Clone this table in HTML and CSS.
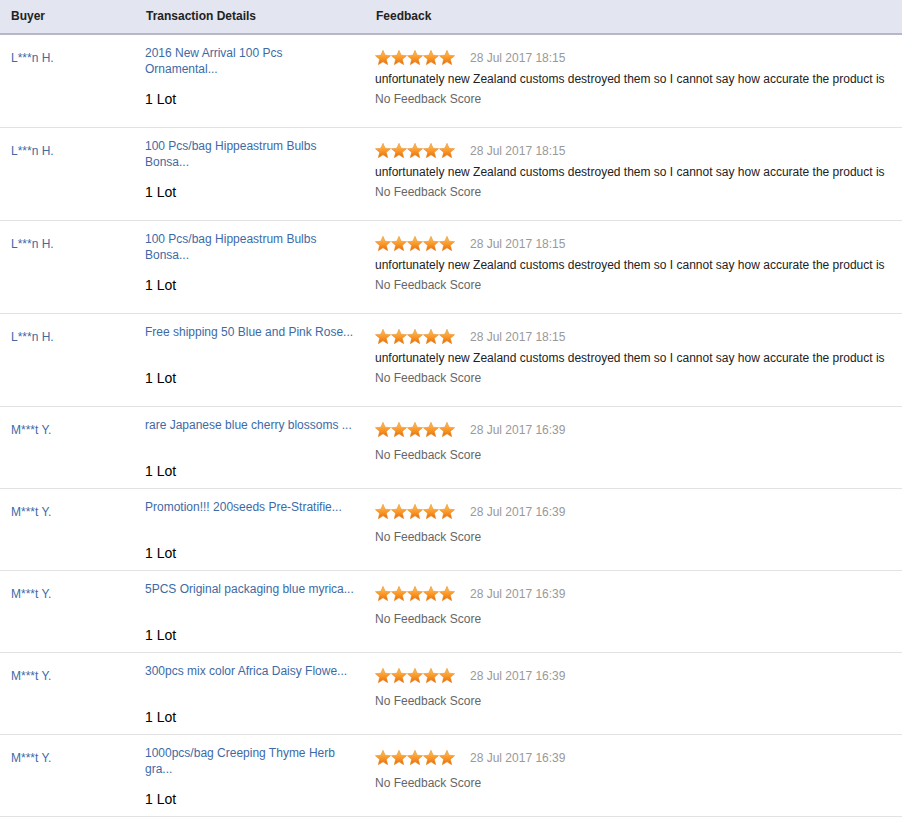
FILE: index.html
```html
<html>
<head>
<meta charset="utf-8">
<link rel="stylesheet" href="styles.css">
</head>
<body>
<svg class="defs" width="0" height="0">
  <defs>
    <linearGradient id="stargrad" x1="0" y1="0" x2="0" y2="1">
      <stop offset="0" stop-color="#ffc45a"/>
      <stop offset="0.5" stop-color="#fb9a2a"/>
      <stop offset="1" stop-color="#e86a0a"/>
    </linearGradient>
    <symbol id="star" viewBox="0 0 16 15">
      <path d="M8 0.3 L10.1 5.2 L15.6 5.7 L11.4 9.3 L12.7 14.7 L8 11.8 L3.3 14.7 L4.6 9.3 L0.4 5.7 L5.9 5.2 Z" fill="url(#stargrad)" stroke="#e08420" stroke-width="0.5"/>
    </symbol>
  </defs>
</svg>

<div class="fbtable">
  <div class="fbrow fbhead">
    <div class="c-buyer">Buyer</div>
    <div class="c-trans">Transaction Details</div>
    <div class="c-fb">Feedback</div>
  </div>

  <div class="fbrow">
    <div class="c-buyer"><a href="#">L***n H.</a></div>
    <div class="c-trans"><a class="ptitle" href="#">2016 New Arrival 100 Pcs Ornamental...</a><p class="qty">1 Lot</p></div>
    <div class="c-fb has-comment">
      <div class="starline"><svg class="stars" viewBox="0 0 80 15"><use href="#star" x="0" width="16" height="15"/><use href="#star" x="16" width="16" height="15"/><use href="#star" x="32" width="16" height="15"/><use href="#star" x="48" width="16" height="15"/><use href="#star" x="64" width="16" height="15"/></svg><span class="date">28 Jul 2017 18:15</span></div>
      <p class="comment">unfortunately new Zealand customs destroyed them so I cannot say how accurate the product is</p>
      <p class="score">No Feedback Score</p>
    </div>
  </div>

  <div class="fbrow">
    <div class="c-buyer"><a href="#">L***n H.</a></div>
    <div class="c-trans"><a class="ptitle" href="#">100 Pcs/bag Hippeastrum Bulbs Bonsa...</a><p class="qty">1 Lot</p></div>
    <div class="c-fb has-comment">
      <div class="starline"><svg class="stars" viewBox="0 0 80 15"><use href="#star" x="0" width="16" height="15"/><use href="#star" x="16" width="16" height="15"/><use href="#star" x="32" width="16" height="15"/><use href="#star" x="48" width="16" height="15"/><use href="#star" x="64" width="16" height="15"/></svg><span class="date">28 Jul 2017 18:15</span></div>
      <p class="comment">unfortunately new Zealand customs destroyed them so I cannot say how accurate the product is</p>
      <p class="score">No Feedback Score</p>
    </div>
  </div>

  <div class="fbrow">
    <div class="c-buyer"><a href="#">L***n H.</a></div>
    <div class="c-trans"><a class="ptitle" href="#">100 Pcs/bag Hippeastrum Bulbs Bonsa...</a><p class="qty">1 Lot</p></div>
    <div class="c-fb has-comment">
      <div class="starline"><svg class="stars" viewBox="0 0 80 15"><use href="#star" x="0" width="16" height="15"/><use href="#star" x="16" width="16" height="15"/><use href="#star" x="32" width="16" height="15"/><use href="#star" x="48" width="16" height="15"/><use href="#star" x="64" width="16" height="15"/></svg><span class="date">28 Jul 2017 18:15</span></div>
      <p class="comment">unfortunately new Zealand customs destroyed them so I cannot say how accurate the product is</p>
      <p class="score">No Feedback Score</p>
    </div>
  </div>

  <div class="fbrow">
    <div class="c-buyer"><a href="#">L***n H.</a></div>
    <div class="c-trans"><a class="ptitle" href="#">Free shipping 50 Blue and Pink Rose...</a><p class="qty">1 Lot</p></div>
    <div class="c-fb has-comment">
      <div class="starline"><svg class="stars" viewBox="0 0 80 15"><use href="#star" x="0" width="16" height="15"/><use href="#star" x="16" width="16" height="15"/><use href="#star" x="32" width="16" height="15"/><use href="#star" x="48" width="16" height="15"/><use href="#star" x="64" width="16" height="15"/></svg><span class="date">28 Jul 2017 18:15</span></div>
      <p class="comment">unfortunately new Zealand customs destroyed them so I cannot say how accurate the product is</p>
      <p class="score">No Feedback Score</p>
    </div>
  </div>

  <div class="fbrow">
    <div class="c-buyer"><a href="#">M***t Y.</a></div>
    <div class="c-trans"><a class="ptitle" href="#">rare Japanese blue cherry blossoms ...</a><p class="qty">1 Lot</p></div>
    <div class="c-fb">
      <div class="starline"><svg class="stars" viewBox="0 0 80 15"><use href="#star" x="0" width="16" height="15"/><use href="#star" x="16" width="16" height="15"/><use href="#star" x="32" width="16" height="15"/><use href="#star" x="48" width="16" height="15"/><use href="#star" x="64" width="16" height="15"/></svg><span class="date">28 Jul 2017 16:39</span></div>
      <p class="score">No Feedback Score</p>
    </div>
  </div>

  <div class="fbrow">
    <div class="c-buyer"><a href="#">M***t Y.</a></div>
    <div class="c-trans"><a class="ptitle" href="#">Promotion!!! 200seeds Pre-Stratifie...</a><p class="qty">1 Lot</p></div>
    <div class="c-fb">
      <div class="starline"><svg class="stars" viewBox="0 0 80 15"><use href="#star" x="0" width="16" height="15"/><use href="#star" x="16" width="16" height="15"/><use href="#star" x="32" width="16" height="15"/><use href="#star" x="48" width="16" height="15"/><use href="#star" x="64" width="16" height="15"/></svg><span class="date">28 Jul 2017 16:39</span></div>
      <p class="score">No Feedback Score</p>
    </div>
  </div>

  <div class="fbrow">
    <div class="c-buyer"><a href="#">M***t Y.</a></div>
    <div class="c-trans"><a class="ptitle" href="#">5PCS Original packaging blue myrica...</a><p class="qty">1 Lot</p></div>
    <div class="c-fb">
      <div class="starline"><svg class="stars" viewBox="0 0 80 15"><use href="#star" x="0" width="16" height="15"/><use href="#star" x="16" width="16" height="15"/><use href="#star" x="32" width="16" height="15"/><use href="#star" x="48" width="16" height="15"/><use href="#star" x="64" width="16" height="15"/></svg><span class="date">28 Jul 2017 16:39</span></div>
      <p class="score">No Feedback Score</p>
    </div>
  </div>

  <div class="fbrow">
    <div class="c-buyer"><a href="#">M***t Y.</a></div>
    <div class="c-trans"><a class="ptitle" href="#">300pcs mix color Africa Daisy Flowe...</a><p class="qty">1 Lot</p></div>
    <div class="c-fb">
      <div class="starline"><svg class="stars" viewBox="0 0 80 15"><use href="#star" x="0" width="16" height="15"/><use href="#star" x="16" width="16" height="15"/><use href="#star" x="32" width="16" height="15"/><use href="#star" x="48" width="16" height="15"/><use href="#star" x="64" width="16" height="15"/></svg><span class="date">28 Jul 2017 16:39</span></div>
      <p class="score">No Feedback Score</p>
    </div>
  </div>

  <div class="fbrow">
    <div class="c-buyer"><a href="#">M***t Y.</a></div>
    <div class="c-trans"><a class="ptitle" href="#">1000pcs/bag Creeping Thyme Herb gra...</a><p class="qty">1 Lot</p></div>
    <div class="c-fb">
      <div class="starline"><svg class="stars" viewBox="0 0 80 15"><use href="#star" x="0" width="16" height="15"/><use href="#star" x="16" width="16" height="15"/><use href="#star" x="32" width="16" height="15"/><use href="#star" x="48" width="16" height="15"/><use href="#star" x="64" width="16" height="15"/></svg><span class="date">28 Jul 2017 16:39</span></div>
      <p class="score">No Feedback Score</p>
    </div>
  </div>
</div>
</body>
</html>
```
FILE: styles.css
```css
html
{
    background: #ffffff;
}
body
{
    margin: 0;
    font-family: "Liberation Sans", Arial, sans-serif;
    font-size: 12px;
    color: #333333;
}
.defs
{
    position: absolute;
    width: 0;
    height: 0;
}
p
{
    margin: 0;
}
a
{
    color: #3d6aa6;
    text-decoration: none;
}
.fbtable
{
    width: 902px;
}
.fbrow
{
    display: grid;
    grid-template-columns: 135px 230px 1fr;
    border-bottom: 1px solid #e2e2e2;
}
.fbhead
{
    background: #e3e5f0;
    border-bottom: 2px solid #b7b8c7;
    height: 33px;
    font-weight: bold;
    color: #222222;
}
.fbhead > div
{
    padding: 9px 10px 0 11px;
    line-height: 14px;
}
.c-buyer
{
    padding: 15px 10px 0 11px;
    line-height: 16px;
}
.c-trans
{
    padding: 10px 10px 8px 10px;
}
.ptitle
{
    display: block;
    height: 32px;
    line-height: 16px;
    width: 210px;
}
.qty
{
    margin-top: 13px;
    font-size: 14px;
    line-height: 18px;
    color: #000000;
}
.c-fb
{
    padding: 10px 10px 10px 10px;
}
.c-fb.has-comment
{
    padding-bottom: 18px;
}
.starline
{
    display: flex;
    align-items: center;
    height: 24px;
}
.stars
{
    width: 80px;
    height: 15px;
    margin-right: 15px;
}
.date
{
    color: #999999;
    padding-top: 1px;
}
.comment
{
    line-height: 20px;
    color: #222222;
}
.score
{
    margin-top: 4px;
    line-height: 20px;
    color: #666666;
}
.has-comment .score
{
    margin-top: 0;
}
```
